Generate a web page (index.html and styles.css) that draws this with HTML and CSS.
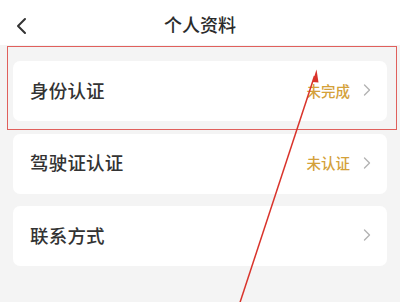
FILE: index.html
```html
<!DOCTYPE html>
<html lang="zh-CN">
<head>
<meta charset="utf-8">
<title>个人资料</title>
<link rel="stylesheet" href="styles.css">
</head>
<body>
<div class="page">
  <header class="topbar">
    <svg class="back" width="12" height="18" viewBox="0 0 12 18"><path d="M10 2 L3 9 L10 16" fill="none" stroke="#333" stroke-width="2" stroke-linecap="round" stroke-linejoin="round"/></svg>
    <h1 class="title">个人资料</h1>
  </header>
  <main class="list">
    <div class="card">
      <span class="label">身份认证</span>
      <span class="right"><span class="status">未完成</span><svg class="chev" width="8" height="12" viewBox="0 0 8 12"><path d="M1.5 1 L6.5 6 L1.5 11" fill="none" stroke="#b3b3b3" stroke-width="1.4" stroke-linecap="round" stroke-linejoin="round"/></svg></span>
    </div>
    <div class="card">
      <span class="label">驾驶证认证</span>
      <span class="right"><span class="status">未认证</span><svg class="chev" width="8" height="12" viewBox="0 0 8 12"><path d="M1.5 1 L6.5 6 L1.5 11" fill="none" stroke="#b3b3b3" stroke-width="1.4" stroke-linecap="round" stroke-linejoin="round"/></svg></span>
    </div>
    <div class="card">
      <span class="label">联系方式</span>
      <span class="right"><svg class="chev" width="8" height="12" viewBox="0 0 8 12"><path d="M1.5 1 L6.5 6 L1.5 11" fill="none" stroke="#b3b3b3" stroke-width="1.4" stroke-linecap="round" stroke-linejoin="round"/></svg></span>
    </div>
  </main>
  <div class="highlight"></div>
  <svg class="arrow" width="400" height="302" viewBox="0 0 400 302">
    <line x1="226" y1="345" x2="314.5" y2="76" stroke="#d9332b" stroke-width="1.5"/>
    <polygon points="316.5,69.5 312.5,82 318.5,82.5" fill="#d9332b"/>
  </svg>
</div>
</body>
</html>
```
FILE: styles.css
```css
* { box-sizing: border-box; }
html, body { margin: 0; padding: 0; }
body {
  width: 400px;
  height: 302px;
  overflow: hidden;
  background: #f4f4f4;
  font-family: "Noto Sans CJK SC", "Noto Sans", sans-serif;
  color: #333;
}
.page {
  position: relative;
  width: 400px;
  height: 302px;
}
.topbar {
  height: 45px;
  background: #fff;
  display: flex;
  align-items: center;
  justify-content: center;
  position: relative;
}
.back {
  position: absolute;
  left: 15px;
  top: 17px;
}
.title {
  margin: 0 0 -2px;
  font-size: 18px;
  font-weight: 500;
  color: #2b2b2b;
  line-height: 1;
}
.list {
  padding: 16px 13px 0;
  display: flex;
  flex-direction: column;
  gap: 12.5px;
}
.card {
  height: 60px;
  background: #fff;
  border-radius: 7px;
  display: flex;
  align-items: center;
  justify-content: space-between;
  padding: 0 16px 0 17px;
}
.label {
  font-size: 18.5px;
  font-weight: 500;
  color: #333;
  letter-spacing: 0.2px;
  margin-bottom: 3px;
}
.right {
  display: flex;
  align-items: center;
  gap: 13px;
}
.status {
  font-size: 14.5px;
  font-weight: 500;
  color: #d4a13a;
  margin-bottom: 2px;
}
.chev { display: block; margin-bottom: 2px; }
.highlight {
  position: absolute;
  left: 7px;
  top: 46px;
  width: 390px;
  height: 84px;
  border: 1.5px solid #e0605c;
}
.arrow {
  position: absolute;
  left: 0;
  top: 0;
}
```
